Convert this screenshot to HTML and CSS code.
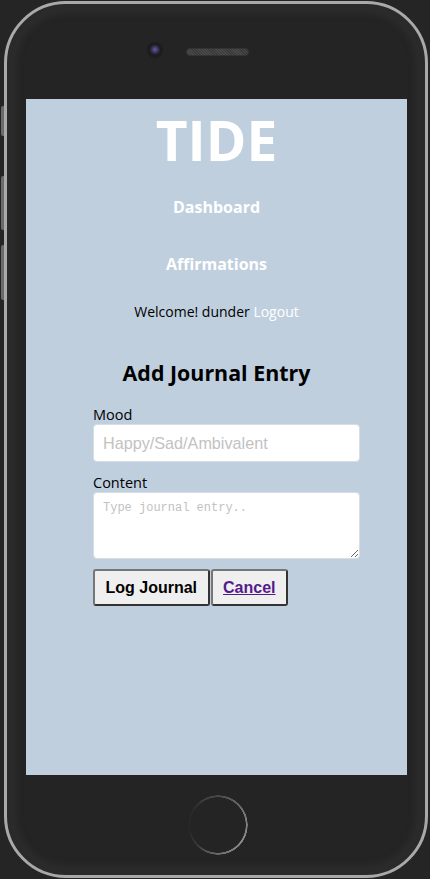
FILE: index.html
```html
<!DOCTYPE html>
<html>
<head>
<meta charset="utf-8">
<link rel="stylesheet" href="styles.css">
</head>
<body>
<div class="phone">
  <span class="side-btn btn-a"></span>
  <span class="side-btn btn-b"></span>
  <span class="side-btn btn-c"></span>
  <div class="bezel-top">
    <span class="camera"></span>
    <span class="speaker"></span>
  </div>
  <div class="screen">
    <h1 class="logo">TIDE</h1>
    <nav class="nav">
      <a class="nav-link">Dashboard</a>
      <a class="nav-link">Affirmations</a>
    </nav>
    <p class="welcome">Welcome! dunder <a class="logout">Logout</a></p>
    <form class="entry-form">
      <h2 class="form-title">Add Journal Entry</h2>
      <label class="field-label">Mood</label>
      <input class="mood-input" type="text" placeholder="Happy/Sad/Ambivalent">
      <label class="field-label content-label">Content</label>
      <textarea class="content-input" placeholder="Type journal entry.."></textarea>
      <div class="actions">
        <button class="btn" type="button">Log Journal</button>
        <button class="btn" type="button"><a class="cancel-link" href="#">Cancel</a></button>
      </div>
    </form>
  </div>
  <div class="bezel-bottom">
    <span class="home"></span>
  </div>
</div>
</body>
</html>
```

FILE: styles.css
```css
html, body {
  margin: 0;
  padding: 0;
  background: #252525;
}

.phone {
  position: relative;
  box-sizing: border-box;
  width: 424px;
  height: 877px;
  margin: 1px 0 0 4px;
  border: 3px solid #a9a9a9;
  border-radius: 62px;
  background: #242424;
  box-shadow: inset 0 0 0 4px #2a2a2a, inset 0 0 6px 10px #2c2c2c;
  display: flex;
  flex-direction: column;
}

.side-btn {
  position: absolute;
  left: -6px;
  width: 3px;
  background: #6a6a6a;
  border-radius: 2px 0 0 2px;
}
.btn-a { top: 102px; height: 30px; }
.btn-b { top: 172px; height: 54px; }
.btn-c { top: 241px; height: 55px; }

.bezel-top {
  height: 95px;
  display: flex;
  justify-content: flex-start;
  align-items: flex-start;
  box-sizing: border-box;
  padding-left: 143px;
}

.camera {
  width: 10px;
  height: 10px;
  margin-top: 41px;
  border-radius: 50%;
  background: radial-gradient(circle at 50% 45%, #6a5a9a 0, #3a2f5a 45%, #1b1b22 75%);
  box-shadow: 0 0 0 3px #1d1d1f;
}

.speaker {
  width: 61px;
  height: 6px;
  margin-top: 45px;
  margin-left: 27px;
  border-radius: 3px;
  background: repeating-linear-gradient(45deg, #4a4a4a 0 1px, #3a3a3a 1px 2px);
  box-shadow: 0 0 0 1px #333;
}

.screen {
  width: 381px;
  height: 676px;
  margin-left: 19px;
  background: #bfcfde;
  font-family: "Open Sans", "Noto Sans", sans-serif;
  display: flex;
  flex-direction: column;
  align-items: center;
}

.logo {
  margin: 3px 0 0;
  font-size: 55px;
  font-weight: 700;
  line-height: 76px;
  color: #ffffff;
  letter-spacing: 0;
}

.nav {
  display: flex;
  flex-direction: column;
  align-items: center;
  gap: 34px;
  margin-top: 18px;
}

.nav-link {
  font-size: 16px;
  font-weight: 700;
  line-height: 23px;
  color: #ffffff;
}

.welcome {
  margin: 26px 0 0;
  font-size: 14px;
  line-height: 20px;
  color: #000;
}

.logout {
  color: #ffffff;
}

.entry-form {
  width: 267px;
  margin: 37px 0 0 20px;
  display: flex;
  flex-direction: column;
}

.form-title {
  margin: 0 0 19px -20px;
  text-align: center;
  font-size: 21.4px;
  font-weight: 700;
  line-height: 28px;
  color: #000;
}

.field-label {
  font-size: 14.5px;
  line-height: 18px;
  color: #000;
}

.content-label {
  margin-top: 12px;
}

.mood-input {
  box-sizing: border-box;
  height: 38px;
  padding: 0 9px;
  border: 1px solid #d6dde3;
  border-radius: 4px;
  background: #fff;
  font-family: "Liberation Sans", Arial, sans-serif;
  font-size: 16.2px;
  outline: none;
}
.mood-input::placeholder { color: #c2c2c2; }

.content-input {
  box-sizing: border-box;
  height: 67px;
  padding: 8px 9px;
  border: 1px solid #d6dde3;
  border-radius: 4px;
  background: #fff;
  font-family: "Liberation Mono", "DejaVu Sans Mono", monospace;
  font-size: 12px;
  resize: vertical;
  outline: none;
}
.content-input::placeholder { color: #c2c2c2; }

.actions {
  display: flex;
  gap: 1px;
  margin-top: 10px;
}

.btn {
  box-sizing: border-box;
  height: 37px;
  padding: 0 10.5px;
  border: 2px solid #555;
  border-color: #767676 #333 #333 #767676;
  border-radius: 3px;
  background: #efefef;
  font-family: "Liberation Sans", Arial, sans-serif;
  font-size: 16px;
  font-weight: 700;
  color: #000;
}

.cancel-link {
  color: #551a8b;
  text-decoration: underline;
}

.bezel-bottom {
  flex: 1;
  display: flex;
  justify-content: center;
  align-items: flex-start;
}

.home {
  width: 60px;
  height: 60px;
  margin-top: 20px;
  margin-left: 3px;
  border-radius: 50%;
  background: conic-gradient(from 0deg, #4a4a4a 0deg, #7e7e7e 80deg, #8c8c8c 130deg, #6e6e6e 180deg, #3a3a3a 225deg, #262626 260deg, #2a2a2a 300deg, #444 340deg, #4a4a4a 360deg);
  -webkit-mask: radial-gradient(circle, transparent 27.5px, #000 28px, #000 29.5px, transparent 30px);
  mask: radial-gradient(circle, transparent 27.5px, #000 28px, #000 29.5px, transparent 30px);
}
```
